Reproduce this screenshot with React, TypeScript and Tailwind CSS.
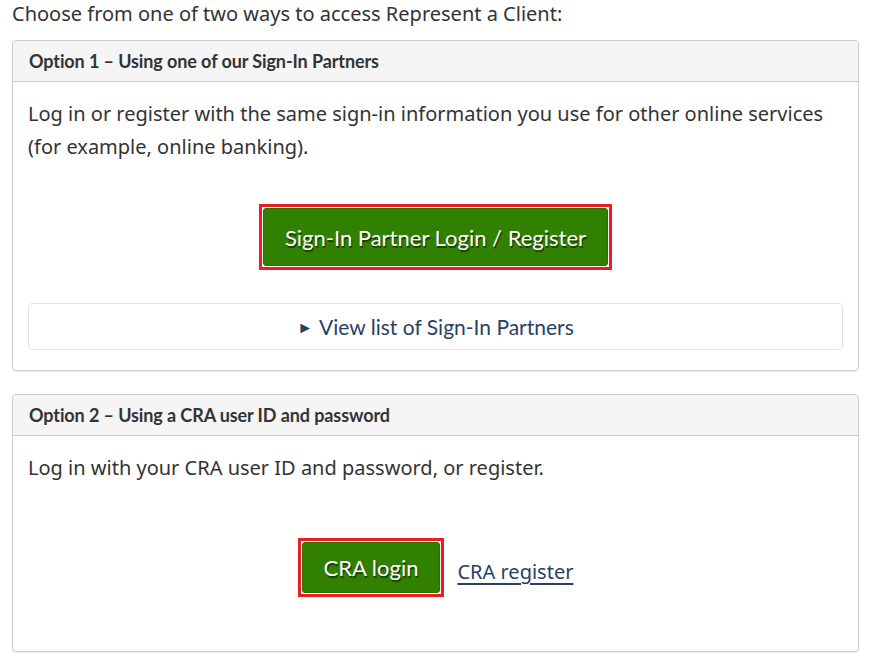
export default function App() {
  return (
    <div className="bg-white w-[879px] h-[658px] overflow-hidden px-3 text-[#333] font-['Noto_Sans',sans-serif]">
      <p className="text-[20px] leading-[28px] pt-0 mb-[12px]">
        Choose from one of two ways to access Represent a Client:
      </p>

      {/* Option 1 */}
      <section className="w-[847px] border border-[#cccccc] rounded-[4px] shadow-[0_1px_1px_rgba(0,0,0,0.08)] h-[331px]">
        <div className="h-[41px] bg-[#f5f5f5] border-b border-[#cccccc] rounded-t-[4px] px-4 flex items-center font-['Lato',sans-serif] font-bold text-[18px] tracking-[-0.1px] text-[#333]">
          Option 1 – Using one of our Sign-In Partners
        </div>
        <div className="px-[15px] pt-[15px]">
          <p className="text-[20px] leading-[33px]">
            Log in or register with the same sign-in information you use for other online services
            (for example, online banking).
          </p>
          <div className="flex justify-center mt-[41px]">
            <div className="border-[3px] border-[#ed1c24] p-px">
              <button className="h-[58px] px-[21px] bg-[#318000] border border-[#2b6e00] rounded-[3px] text-white font-['Lato',sans-serif] text-[22px] [text-shadow:1px_2px_1px_rgba(0,0,0,0.55)]">
                Sign-In Partner Login / Register
              </button>
            </div>
          </div>
          <div className="mt-[33px] h-[47px] border border-[#e3e3e3] rounded-[4px] flex items-center justify-center font-['Lato',sans-serif] text-[21px] text-[#284162]">
            <span className="text-[16px] mr-[6px]">►</span>
            View list of Sign-In Partners
          </div>
        </div>
      </section>

      {/* Option 2 */}
      <section className="w-[847px] mt-[23px] border border-[#cccccc] rounded-[4px] shadow-[0_1px_1px_rgba(0,0,0,0.08)] h-[258px]">
        <div className="h-[41px] bg-[#f5f5f5] border-b border-[#cccccc] rounded-t-[4px] px-4 flex items-center font-['Lato',sans-serif] font-bold text-[18px] tracking-[-0.1px] text-[#333]">
          Option 2 – Using a CRA user ID and password
        </div>
        <div className="px-[15px] pt-[15px]">
          <p className="text-[20px] leading-[33px]">
            Log in with your CRA user ID and password, or register.
          </p>
          <div className="flex justify-center items-center gap-[13px] mt-[54px]">
            <div className="border-[3px] border-[#ed1c24] p-px">
              <button className="h-[51px] px-[21px] bg-[#318000] border border-[#2b6e00] rounded-[3px] text-white font-['Lato',sans-serif] text-[22px] [text-shadow:1px_2px_1px_rgba(0,0,0,0.55)]">
                CRA login
              </button>
            </div>
            <a href="#" className="mt-[9px] text-[20px] text-[#284162] underline underline-offset-[4px]">
              CRA register
            </a>
          </div>
        </div>
      </section>
    </div>
  );
}
